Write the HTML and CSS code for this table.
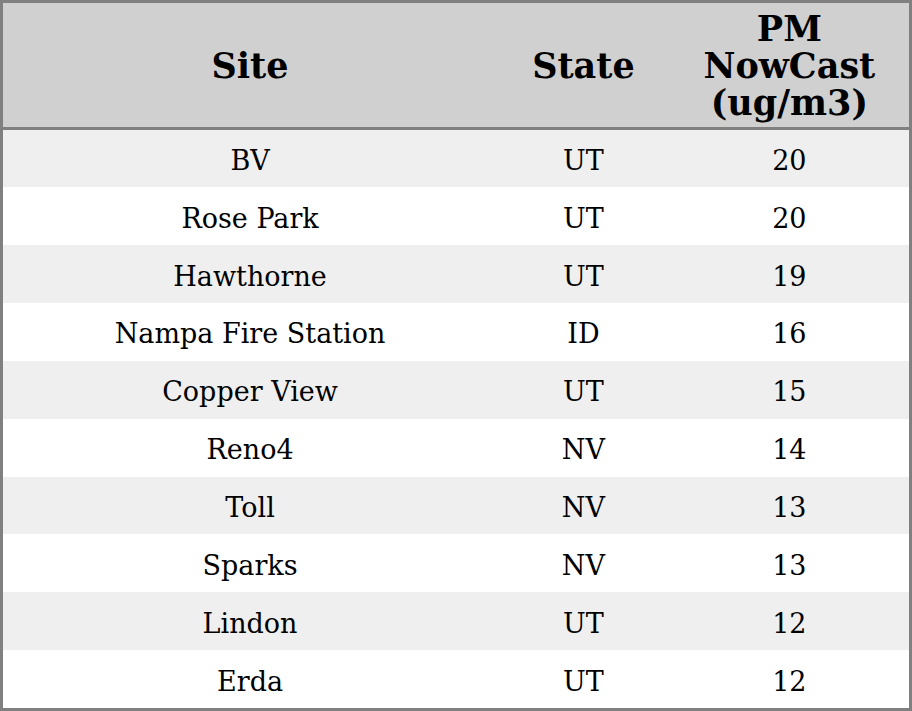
FILE: index.html
```html
<!DOCTYPE html>
<html>
<head>
<meta charset="utf-8">
<link rel="stylesheet" href="styles.css">
</head>
<body>
<table class="aq">
  <colgroup>
    <col class="c-site">
    <col class="c-state">
    <col class="c-pm">
  </colgroup>
  <thead>
    <tr><th>Site</th><th>State</th><th>PM<br>NowCast<br>(ug/m3)</th></tr>
  </thead>
  <tbody>
    <tr><td>BV</td><td>UT</td><td>20</td></tr>
    <tr><td>Rose Park</td><td>UT</td><td>20</td></tr>
    <tr><td>Hawthorne</td><td>UT</td><td>19</td></tr>
    <tr><td>Nampa Fire Station</td><td>ID</td><td>16</td></tr>
    <tr><td>Copper View</td><td>UT</td><td>15</td></tr>
    <tr><td>Reno4</td><td>NV</td><td>14</td></tr>
    <tr><td>Toll</td><td>NV</td><td>13</td></tr>
    <tr><td>Sparks</td><td>NV</td><td>13</td></tr>
    <tr><td>Lindon</td><td>UT</td><td>12</td></tr>
    <tr><td>Erda</td><td>UT</td><td>12</td></tr>
  </tbody>
</table>
</body>
</html>
```

FILE: styles.css
```css
html, body {
  margin: 0;
  padding: 0;
  background: #ffffff;
}
.aq {
  width: 912px;
  height: 711px;
  border-collapse: collapse;
  border: 3px solid #808080;
  font-family: "DejaVu Serif", serif;
  color: #000;
  table-layout: fixed;
}
.c-site { width: 494px; }
.c-state { width: 172px; }
.c-pm { width: 240px; }
.aq th {
  background: #d0d0d0;
  font-size: 35px;
  font-weight: bold;
  line-height: 37px;
  padding: 7px 4px 5.5px;
  text-align: center;
  border-bottom: 3px solid #808080;
}
.aq td {
  font-size: 27px;
  line-height: 31px;
  text-align: center;
  padding: 4px 4px 0;
  height: 53.7px;
}
.aq tbody tr:nth-child(odd) { background: #efefef; }
.aq tbody tr:nth-child(even) { background: #ffffff; }
```
